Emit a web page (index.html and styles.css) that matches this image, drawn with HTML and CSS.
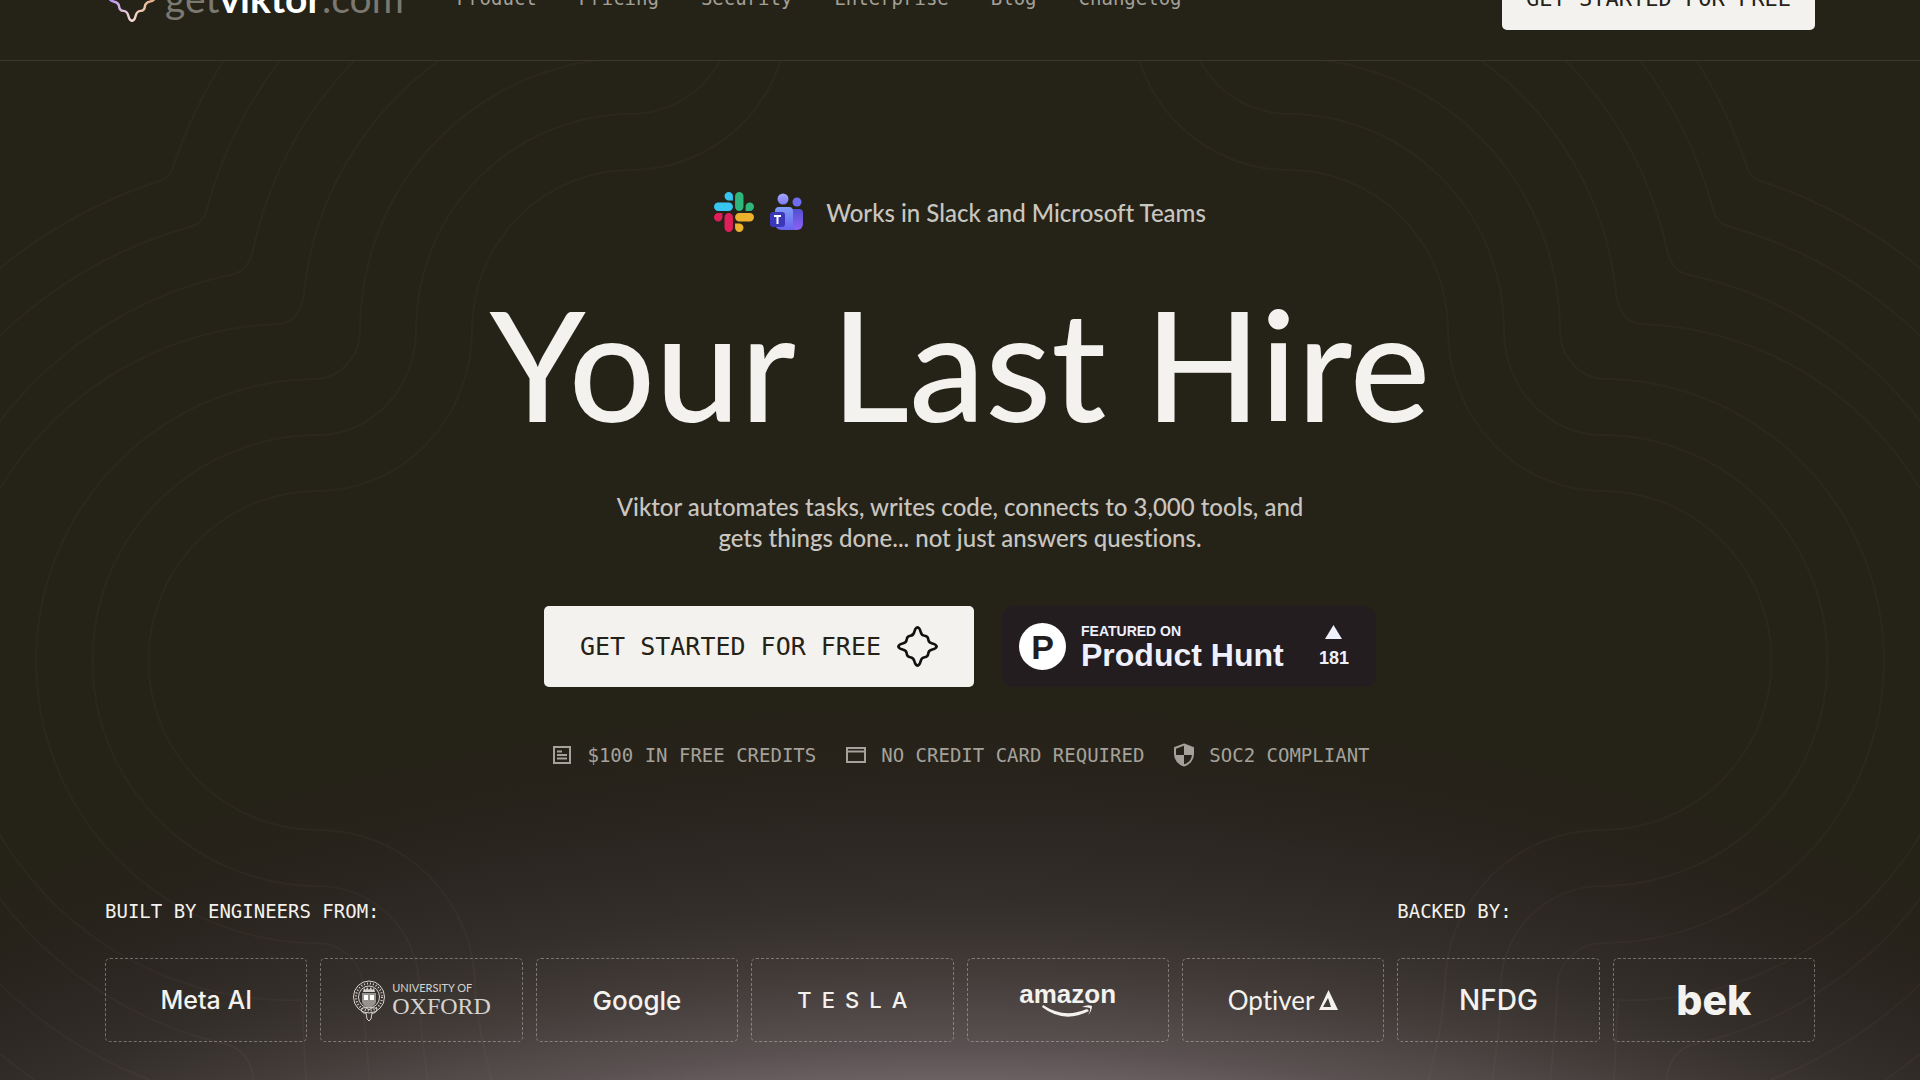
FILE: index.html
```html
<!DOCTYPE html>
<html lang="en">
<head>
    <meta charset="UTF-8">
    <meta name="viewport" content="width=device-width, initial-scale=1.0">
    <title>Viktor - Your Last Hire</title>
    <link rel="stylesheet" href="styles.css">
</head>
<body>
    <!-- shared shapes -->
    <svg class="defs" width="0" height="0" aria-hidden="true">
        <defs>
            <path id="star-side" d="M0 -18.500c2 0 2.500 2 3 4 .6 2.600 1.600 3.800 4 4 2.200 .2 3.300 1.300 3.500 3.500 .2 2.400 1.400 3.400 4 4 2 .5 4 1 4 3"/>
            <g id="star">
                <use href="#star-side"/>
                <use href="#star-side" transform="rotate(90)"/>
                <use href="#star-side" transform="rotate(180)"/>
                <use href="#star-side" transform="rotate(270)"/>
            </g>
            <g id="contours">
                <path d="M492 1080Q478 1030 475 987A157 157 0 0 0 318 830A169 169 0 0 1 318 491A154 161 0 0 0 472 330A159 160 0 0 1 631 170A157 157 0 0 0 788 13"/>
                <path d="M428 1080Q420 1030 419 987A101 101 0 0 0 318 886A225 225 0 0 1 318 435A98 105 0 0 0 416 330A216 216 0 0 1 631 114A101 101 0 0 0 732 13"/>
                <path d="M370 1080Q364 1030 363 987A46 46 0 0 0 318 943A282 282 0 0 1 318 379A46 49 0 0 0 360 330A272 272 0 0 1 631 58"/>
                <path d="M306 1080L302 1000A338 338 0 0 1 279 324Q300 322 304 293A328 328 0 0 1 440 60"/>
                <path d="M254 1085Q252 1050 225 1044A394 394 0 0 1 230 275Q248 272 253 250A384 384 0 0 1 355 60"/>
                <path d="M150 1080A450 450 0 0 1 193 226Q205 222 208 205A440 440 0 0 1 280 60"/>
                <path d="M35 1080A506 506 0 0 1 150 184Q168 180 172 170A496 496 0 0 1 224 60"/>
            </g>
        </defs>
    </svg>

    <header class="header">
        <a href="#" class="logo">
            <svg class="logo-mark" viewBox="-22 -22 44 44" aria-hidden="true">
                <defs>
                    <linearGradient id="mark-fill" gradientUnits="userSpaceOnUse" x1="-19" y1="0" x2="19" y2="0">
                        <stop offset="0" stop-color="#b48cf2"/>
                        <stop offset=".5" stop-color="#f3dcd0"/>
                        <stop offset="1" stop-color="#e5a982"/>
                    </linearGradient>
                    <mask id="mark-mask" maskUnits="userSpaceOnUse" x="-22" y="-22" width="44" height="44">
                        <use href="#star" fill="none" stroke="#fff" stroke-width="2" stroke-linecap="round"/>
                    </mask>
                </defs>
                <rect x="-22" y="-22" width="44" height="44" fill="url(#mark-fill)" mask="url(#mark-mask)"/>
            </svg>
            <span class="logo-text">get<b>viktor</b>.com</span>
        </a>
        <nav class="nav">
            <a href="#">Product</a>
            <a href="#">Pricing</a>
            <a href="#">Security</a>
            <a href="#">Enterprise</a>
            <a href="#">Blog</a>
            <a href="#">Changelog</a>
        </nav>
        <button type="button" class="btn btn-small">GET STARTED FOR FREE</button>
    </header>

    <main class="hero">
        <svg class="lines" viewBox="0 61 1920 1019" preserveAspectRatio="xMidYMid slice" aria-hidden="true">
            <use href="#contours"/>
            <use href="#contours" transform="translate(1920 0) scale(-1 1)"/>
        </svg>

        <div class="works-in">
            <svg class="slack" viewBox="0 0 24 24" aria-hidden="true">
                <path fill="#e01e5a" d="M5.042 15.165a2.528 2.528 0 0 1-2.520 2.523A2.528 2.528 0 0 1 0 15.165a2.527 2.527 0 0 1 2.522-2.520h2.520v2.520zM6.313 15.165a2.527 2.527 0 0 1 2.521-2.520 2.527 2.527 0 0 1 2.521 2.520v6.313A2.528 2.528 0 0 1 8.834 24a2.528 2.528 0 0 1-2.521-2.522v-6.313z"/>
                <path fill="#36c5f0" d="M8.834 5.042a2.528 2.528 0 0 1-2.521-2.520A2.528 2.528 0 0 1 8.834 0a2.528 2.528 0 0 1 2.521 2.522v2.520H8.834zM8.834 6.313a2.528 2.528 0 0 1 2.521 2.521 2.528 2.528 0 0 1-2.521 2.521H2.522A2.528 2.528 0 0 1 0 8.834a2.528 2.528 0 0 1 2.522-2.521h6.312z"/>
                <path fill="#2eb67d" d="M18.956 8.834a2.528 2.528 0 0 1 2.522-2.521A2.528 2.528 0 0 1 24 8.834a2.528 2.528 0 0 1-2.522 2.521h-2.522V8.834zM17.688 8.834a2.528 2.528 0 0 1-2.523 2.521 2.527 2.527 0 0 1-2.520-2.521V2.522A2.527 2.527 0 0 1 15.165 0a2.528 2.528 0 0 1 2.523 2.522v6.312z"/>
                <path fill="#ecb22e" d="M15.165 18.956a2.528 2.528 0 0 1 2.523 2.522A2.528 2.528 0 0 1 15.165 24a2.527 2.527 0 0 1-2.520-2.522v-2.522h2.520zM15.165 17.688a2.527 2.527 0 0 1-2.520-2.523 2.526 2.526 0 0 1 2.520-2.520h6.313A2.527 2.527 0 0 1 24 15.165a2.528 2.528 0 0 1-2.522 2.523h-6.313z"/>
            </svg>
            <svg class="teams" viewBox="0 0 34 38" aria-hidden="true">
                <defs>
                    <linearGradient id="t-body" x1="0" y1="0" x2="0" y2="1">
                        <stop offset="0" stop-color="#7f9cf8"/>
                        <stop offset="1" stop-color="#6a62ee"/>
                    </linearGradient>
                    <linearGradient id="t-side" x1="0" y1="0" x2="0" y2="1">
                        <stop offset="0" stop-color="#5250d0"/>
                        <stop offset="1" stop-color="#8d62f5"/>
                    </linearGradient>
                    <linearGradient id="t-head" x1="0" y1="0" x2="0" y2="1">
                        <stop offset="0" stop-color="#a3a5ff"/>
                        <stop offset="1" stop-color="#7d7df0"/>
                    </linearGradient>
                </defs>
                <circle cx="27" cy="9" r="4.500" fill="#6f6cf0"/>
                <circle cx="13" cy="6" r="5.500" fill="url(#t-head)"/>
                <path d="M20 16h9a4 4 0 0 1 4 4v11a6 6 0 0 1-6 6h-9z" fill="url(#t-side)"/>
                <path d="M9 14h10a4 4 0 0 1 4 4v13q0 6 5 6H12q-7 0-7-7V18a4 4 0 0 1 4-4z" fill="url(#t-body)"/>
                <rect x="0" y="19" width="15" height="15" rx="3" fill="#3a38b8"/>
                <path d="M4 23h7M7.500 23v8" stroke="#fff" stroke-width="2" fill="none"/>
            </svg>
            <span>Works in Slack and Microsoft Teams</span>
        </div>

        <h1>Your Last Hire</h1>

        <p class="lead">Viktor automates tasks, writes code, connects to 3,000 tools, and<br>gets things done... not just answers questions.</p>

        <div class="actions">
            <button type="button" class="btn btn-large">
                <span>GET STARTED FOR FREE</span>
                <svg viewBox="-20 -20 40 40" aria-hidden="true"><use href="#star"/></svg>
            </button>
            <a href="#" class="ph-badge">
                <span class="ph-mark">P</span>
                <span class="ph-text">
                    <small>FEATURED ON</small>
                    <strong>Product Hunt</strong>
                </span>
                <span class="ph-votes">
                    <svg viewBox="0 0 17 14" aria-hidden="true"><path d="M8.500 0L17 14H0z"/></svg>
                    <span>181</span>
                </span>
            </a>
        </div>

        <ul class="perks">
            <li>
                <svg viewBox="0 0 24 24" aria-hidden="true">
                    <path d="M4 4h16v16H4zM7 8.500h5M7 12h10M7 15.500h10" fill="none" stroke="currentColor" stroke-width="2"/>
                </svg>
                $100 IN FREE CREDITS
            </li>
            <li>
                <svg viewBox="0 0 24 24" aria-hidden="true">
                    <path d="M3 5h18v14H3zM3 8.500h18" fill="none" stroke="currentColor" stroke-width="2"/>
                </svg>
                NO CREDIT CARD REQUIRED
            </li>
            <li>
                <svg viewBox="0 0 24 24" aria-hidden="true">
                    <path d="M12 1.500L21 5v6c0 5.500-3.800 9.800-9 11.500C6.800 20.800 3 16.500 3 11V5z" fill="none" stroke="currentColor" stroke-width="2"/>
                    <path d="M12 2v10h8.500V5zM12 12v10C7.500 20.500 4 16.500 3.500 12z" fill="currentColor"/>
                </svg>
                SOC2 COMPLIANT
            </li>
        </ul>

        <section class="companies">
            <h2 class="built">BUILT BY ENGINEERS FROM:</h2>
            <h2 class="backed">BACKED BY:</h2>
            <div class="company meta">Meta AI</div>
            <div class="company oxford">
                <svg viewBox="0 0 34 41" aria-hidden="true">
                    <ellipse cx="17" cy="17" rx="15.500" ry="16" fill="none" stroke="currentColor" stroke-width="1"/>
                    <ellipse cx="17" cy="17" rx="13" ry="13.500" fill="none" stroke="currentColor" stroke-width="2" stroke-dasharray="1 2"/>
                    <ellipse cx="17" cy="17" rx="10.500" ry="11" fill="none" stroke="currentColor" stroke-width="1"/>
                    <path d="M10 13h14v9q-1 4-7 6-6-2-7-6z" fill="currentColor" opacity=".6"/>
                    <path d="M12 15h4v5h-4zM18 15h4v5h-4z" fill="#fff"/>
                    <path d="M11 12l1-4 2 2 1-3 2 3 2-3 1 3 2-2 1 4z" fill="currentColor"/>
                    <path d="M9 29q4-3 8 1 4-4 8-1-1 5-5 4l-1 6-2 2-2-2-1-6q-4 1-5-4z" fill="none" stroke="currentColor" stroke-width="1"/>
                </svg>
                <span class="oxford-text"><small>UNIVERSITY OF</small><span>OXFORD</span></span>
            </div>
            <div class="company google">Google</div>
            <div class="company tesla">TESLA</div>
            <div class="company amazon">
                <span>amazon</span>
                <svg viewBox="0 0 52 12" aria-hidden="true">
                    <path d="M1 0Q22 14 45 4l2 2Q22 19 0 2z"/>
                    <path d="M40 2q6-3 10-1 0 5-4 9 3-4 2-7-3-1-8-1z"/>
                </svg>
            </div>
            <div class="company optiver">
                Optiver
                <svg viewBox="0 0 19 20" aria-hidden="true"><path fill-rule="evenodd" d="M9.500 0L19 20H0zM9 8L4 17h8z"/></svg>
            </div>
            <div class="company nfdg">NFDG</div>
            <div class="company bek">bek</div>
        </section>
    </main>
</body>
</html>
```
FILE: styles.css
```css
* {
    margin: 0;
    padding: 0;
    box-sizing: border-box;
}
body {
    display: flex;
    flex-direction: column;
    height: 100vh;
    background: #252218;
    color: #f4f2ee;
    font-family: Lato, "Liberation Sans", sans-serif;
    font-variant-ligatures: none;
    overflow: hidden;
}
a {
    color: inherit;
    text-decoration: none;
}
.defs {
    position: absolute;
}

/* header, partly scrolled off the top */
.header {
    display: flex;
    align-items: center;
    flex-shrink: 0;
    height: 125px;
    margin-top: -64px;
    padding: 0 105px;
    border-bottom: 1px solid #3a372d;
}
.logo {
    display: flex;
    align-items: center;
    gap: 6px;
    margin-right: 53px;
}
.logo-mark {
    width: 54px;
    height: 54px;
}
.logo-text {
    font-size: 39px;
    line-height: 48px;
    color: #7b786f;
}
.logo-text b {
    font-weight: 700;
    color: #fff;
}
.nav {
    display: flex;
    gap: 42px;
    font-family: "DejaVu Sans Mono", monospace;
    font-size: 19px;
    color: #a3a098;
}
.btn {
    display: flex;
    align-items: center;
    justify-content: center;
    border: none;
    border-radius: 5px;
    background: #f4f2ee;
    color: #252218;
    font-family: "DejaVu Sans Mono", monospace;
    white-space: nowrap;
    cursor: pointer;
}
.btn-small {
    height: 64px;
    margin-left: auto;
    padding: 0 24px;
    font-size: 22px;
}
.btn-large {
    gap: 16px;
    height: 81px;
    padding: 0 36px;
    font-size: 25px;
}
.btn-large svg {
    width: 41px;
    height: 41px;
    fill: none;
    stroke: #111;
    stroke-width: 2.5;
    stroke-linecap: round;
}

.hero {
    position: relative;
    display: flex;
    flex-direction: column;
    align-items: center;
    flex: 1;
    padding: 131px 105px 38px;
    background: radial-gradient(circle 2600px at 50% calc(100% + 2220px),
        #6b6062 2220px, #5a5051 2255px, #423b38 2330px, #332e29 2400px, #2a251f 2490px, #27231b 2540px, #252218 2600px);
}
.hero > * {
    position: relative;
}
.hero .lines {
    position: absolute;
    inset: 0;
    width: 100%;
    height: 100%;
    fill: none;
    stroke: #ffdcc0;
    stroke-width: 2;
    stroke-opacity: 0.03;
}
.works-in {
    display: flex;
    align-items: center;
    height: 40px;
    font-size: 24px;
    font-weight: 500;
    color: #c9c6c0;
}
.slack {
    width: 40px;
    height: 40px;
    margin-right: 16px;
}
.teams {
    width: 34px;
    height: 38px;
    margin-right: 22px;
}
h1 {
    margin-top: 36px;
    font-size: 152px;
    line-height: 190px;
    font-weight: 500;
    white-space: nowrap;
}
.lead {
    margin-top: 33px;
    font-size: 24px;
    line-height: 31px;
    font-weight: 500;
    text-align: center;
    color: #c9c6c0;
}
.actions {
    display: flex;
    gap: 28px;
    margin-top: 53px;
}
.ph-badge {
    display: flex;
    align-items: center;
    width: 374px;
    height: 81px;
    padding: 0 27px 0 17px;
    border-radius: 12px;
    background: #231d20;
    color: #eef0fc;
    font-family: "Liberation Sans", sans-serif;
    font-weight: 700;
}
.ph-mark {
    width: 47px;
    height: 47px;
    border-radius: 50%;
    background: #fff;
    color: #231d20;
    font-size: 34px;
    line-height: 48px;
    text-align: center;
}
.ph-text {
    display: flex;
    flex-direction: column;
    margin-left: 15px;
}
.ph-text small {
    font-size: 14px;
    line-height: 16px;
}
.ph-text strong {
    font-size: 32px;
    line-height: 32px;
}
.ph-votes {
    display: flex;
    flex-direction: column;
    align-items: center;
    gap: 9px;
    margin-left: auto;
    font-size: 18px;
    line-height: 20px;
}
.ph-votes svg {
    width: 17px;
    height: 14px;
    fill: #eef0fc;
}
.perks {
    display: flex;
    gap: 28px;
    margin-top: 55px;
    list-style: none;
    font-family: "DejaVu Sans Mono", monospace;
    font-size: 19px;
    line-height: 26px;
    color: #a5a29b;
}
.perks li {
    display: flex;
    align-items: center;
    gap: 13px;
}
.perks svg {
    width: 24px;
    height: 24px;
}

/* logo row */
.companies {
    display: grid;
    grid-template-columns: repeat(8, 1fr);
    column-gap: 13px;
    row-gap: 34px;
    width: 100%;
    margin-top: auto;
}
.companies h2 {
    font-family: "DejaVu Sans Mono", monospace;
    font-size: 19px;
    line-height: 26px;
    font-weight: 400;
}
.built {
    grid-column: span 6;
}
.backed {
    grid-column: span 2;
}
.company {
    display: flex;
    align-items: center;
    justify-content: center;
    height: 84px;
    border: 1px dashed rgba(244, 242, 238, 0.35);
    border-radius: 5px;
}
.company svg {
    fill: currentColor;
}
.meta {
    font-family: Inter, sans-serif;
    font-size: 25px;
    font-weight: 500;
}
.oxford {
    gap: 6px;
    color: #d5d2cf;
}
.oxford svg {
    width: 34px;
    height: 41px;
}
.oxford-text {
    display: flex;
    flex-direction: column;
    font-family: "Liberation Serif", serif;
    font-size: 24px;
    line-height: 24px;
}
.oxford-text small {
    font-family: Lato, sans-serif;
    font-size: 11px;
    line-height: 12px;
}
.google {
    font-family: Inter, sans-serif;
    font-size: 26px;
    font-weight: 500;
}
.tesla {
    padding-left: 10px;
    font-family: Inter, sans-serif;
    font-size: 22px;
    font-weight: 500;
    letter-spacing: 10px;
}
.amazon {
    flex-direction: column;
    font-family: "Liberation Sans", sans-serif;
    font-size: 26px;
    line-height: 22px;
    font-weight: 700;
}
.amazon svg {
    width: 52px;
    height: 12px;
}
.optiver {
    gap: 5px;
    font-size: 26px;
}
.optiver svg {
    width: 19px;
    height: 20px;
}
.nfdg {
    font-family: Inter, sans-serif;
    font-size: 28px;
    font-weight: 500;
}
.bek {
    font-family: Inter, sans-serif;
    font-size: 41px;
    font-weight: 800;
}
```
